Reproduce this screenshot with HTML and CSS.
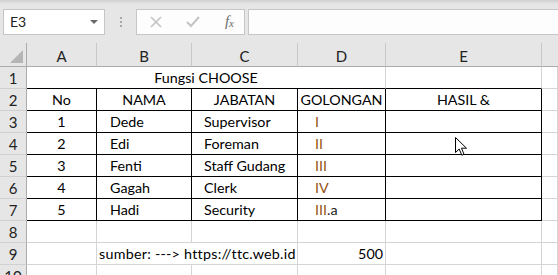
FILE: index.html
```html
<!DOCTYPE html>
<html lang="id">
<head>
	<meta charset="UTF-8">
	<title>Fungsi CHOOSE</title>
	<link rel="stylesheet" href="styles.css">
</head>
<body>
	<div class="toolbar">
		<div class="namebox">
			<span>E3</span>
			<i class="caret"></i>
		</div>
		<div class="grip"><b></b><b></b><b></b></div>
		<div class="fxbtns">
			<svg class="ico" width="12" height="12" viewBox="0 0 12 12"><path d="M1 1L11 11M11 1L1 11" stroke="#c3c3c3" stroke-width="1.6" fill="none"/></svg>
			<svg class="ico" width="14" height="12" viewBox="0 0 14 12"><path d="M1 6L5 10L13 1" stroke="#c3c3c3" stroke-width="2" fill="none"/></svg>
			<span class="fx">f<sub>x</sub></span>
		</div>
		<div class="formula"></div>
	</div>

	<div class="sheet">
		<div class="corner"><i></i></div>
		<div class="ch">A</div>
		<div class="ch">B</div>
		<div class="ch">C</div>
		<div class="ch">D</div>
		<div class="ch">E</div>
		<div class="ch last"></div>

		<div class="rh">1</div>
		<div class="c tb mid span4">Fungsi CHOOSE</div>
		<div class="c tb"></div>
		<div class="c"></div>

		<div class="rh">2</div>
		<div class="c t mid">No</div>
		<div class="c t mid">NAMA</div>
		<div class="c t mid">JABATAN</div>
		<div class="c t mid">GOLONGAN</div>
		<div class="c t mid">HASIL &amp;</div>
		<div class="c"></div>

		<div class="rh">3</div>
		<div class="c t mid">1</div>
		<div class="c t nm">Dede</div>
		<div class="c t jb">Supervisor</div>
		<div class="c t gl">I</div>
		<div class="c t"></div>
		<div class="c"></div>

		<div class="rh">4</div>
		<div class="c t mid">2</div>
		<div class="c t nm">Edi</div>
		<div class="c t jb">Foreman</div>
		<div class="c t gl">II</div>
		<div class="c t"></div>
		<div class="c"></div>

		<div class="rh">5</div>
		<div class="c t mid">3</div>
		<div class="c t nm">Fenti</div>
		<div class="c t jb">Staff Gudang</div>
		<div class="c t gl">III</div>
		<div class="c t"></div>
		<div class="c"></div>

		<div class="rh">6</div>
		<div class="c t mid">4</div>
		<div class="c t nm">Gagah</div>
		<div class="c t jb">Clerk</div>
		<div class="c t gl">IV</div>
		<div class="c t"></div>
		<div class="c"></div>

		<div class="rh">7</div>
		<div class="c t mid">5</div>
		<div class="c t nm">Hadi</div>
		<div class="c t jb">Security</div>
		<div class="c t gl">III<span>.a</span></div>
		<div class="c t"></div>
		<div class="c"></div>

		<div class="rh">8</div>
		<div class="c"></div>
		<div class="c"></div>
		<div class="c"></div>
		<div class="c"></div>
		<div class="c"></div>
		<div class="c"></div>

		<div class="rh">9</div>
		<div class="c"></div>
		<div class="c src span2">sumber: ---&gt; https://ttc.web.id</div>
		<div class="c num">500</div>
		<div class="c"></div>
		<div class="c"></div>

		<div class="rh">10</div>
		<div class="c"></div>
		<div class="c"></div>
		<div class="c"></div>
		<div class="c"></div>
		<div class="c"></div>
		<div class="c"></div>

		<svg class="pointer" width="13" height="20" viewBox="0 0 13 20"><path d="M0.5 0.5L0.5 15.5L4.2 12L6.8 18.2L9 17.3L6.5 11.2L11.5 11.2Z" fill="#fff" stroke="#000" stroke-width="1"/></svg>
	</div>
</body>
</html>
```

FILE: styles.css
```css
body{
	margin:0;
	padding:0;
	width:558px;
	height:275px;
	overflow:hidden;
	font:14.3px Lato, "Liberation Sans", sans-serif;
	color:#000;
	background:#fff;
}
.toolbar{
	display:flex;
	align-items:center;
	height:43px;
	padding:0 0 0 3px;
	background:linear-gradient(#cfcfcf, #e6e6e6 4px);
	box-sizing:border-box;
}
.namebox{
	display:flex;
	align-items:center;
	justify-content:space-between;
	width:102px;
	height:26px;
	padding:0 6px 0 6px;
	background:#fff;
	border:1px solid #c6c6c6;
	box-sizing:border-box;
	font-size:14px;
	color:#222;
}
.caret{
	width:0;
	height:0;
	border-left:4px solid transparent;
	border-right:4px solid transparent;
	border-top:4px solid #6a6a6a;
}
.grip{
	display:flex;
	flex-direction:column;
	gap:2px;
	width:31px;
	align-items:center;
}
.grip b{
	width:2px;
	height:2px;
	background:#a8a8a8;
}
.fxbtns{
	display:flex;
	align-items:center;
	justify-content:space-between;
	width:109px;
	height:26px;
	padding:0 10px 0 13px;
	background:#fdfdfd;
	border:1px solid #c6c6c6;
	box-sizing:border-box;
}
.fx{
	font:italic 15px "Liberation Serif", serif;
	color:#6a6a6a;
}
.fx sub{
	font-size:11px;
	vertical-align:0;
	position:relative;
	top:1px;
}
.formula{
	flex:1;
	height:26px;
	margin-left:3px;
	background:#fdfdfd;
	border:1px solid #c6c6c6;
	border-right:0;
	box-sizing:border-box;
}
.sheet{
	position:relative;
	display:grid;
	grid-template-columns:27px 70px 95px 106px 88px 156px 1fr;
	grid-template-rows:24px;
	grid-auto-rows:22px;
}
.sheet > div{
	box-sizing:border-box;
	white-space:nowrap;
	overflow:hidden;
}
.corner{
	position:relative;
	background:#e6e6e6;
	border-right:1px solid #ababab;
	border-bottom:1px solid #ababab;
}
.corner i{
	position:absolute;
	right:3px;
	bottom:3px;
	width:0;
	height:0;
	border-left:13px solid transparent;
	border-bottom:13px solid #b5b5b5;
}
.ch{
	background:#e6e6e6;
	border-bottom:1px solid #ababab;
	border-right:1px solid #c8c8c8;
	text-align:center;
	line-height:26px;
	font-size:15px;
	color:#222;
	background-image:linear-gradient(#e6e6e6 3px, transparent 3px);
}
.ch.last{
	border-right:0;
}
.rh{
	background:#e6e6e6;
	border-right:1px solid #ababab;
	border-bottom:1px solid #d0d0d0;
	text-align:center;
	line-height:22px;
	font-size:15px;
	color:#222;
}
.c{
	border-right:1px solid #d4d4d4;
	border-bottom:1px solid #d4d4d4;
	line-height:22px;
	padding:0 2px;
}
.c.t{
	border-right-color:#000;
	border-bottom-color:#000;
}
.c.tb{
	border-bottom-color:#000;
}
.mid{
	text-align:center;
}
.span4{
	grid-column:span 4;
}
.span2{
	grid-column:span 2;
}
.src{
	letter-spacing:0.25px;
}
.nm{
	padding-left:13px;
}
.jb{
	padding-left:12px;
}
.gl{
	padding-left:17px;
	color:#94500f;
}
.gl span{
	color:#222;
}
.num{
	text-align:right;
}
.pointer{
	position:absolute;
	left:455px;
	top:94px;
}
```
